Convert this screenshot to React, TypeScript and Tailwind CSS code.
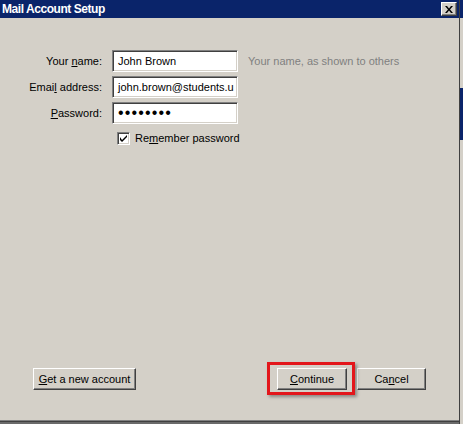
import React from 'react';

const font = "font-['Liberation_Sans',Arial,sans-serif]";

const raised =
  'border border-t-white border-l-white border-b-[#404040] border-r-[#404040] shadow-[inset_-1px_-1px_0_#808080,inset_1px_1px_0_#d4d0c8] bg-[#d4d0c8]';
const sunken =
  'border border-t-[#808080] border-l-[#808080] border-b-white border-r-white shadow-[inset_1px_1px_0_#404040,inset_-1px_-1px_0_#d4d0c8] bg-white';

const Field: React.FC<{ label: React.ReactNode; children: React.ReactNode; hint?: string }> = ({ label, children, hint }) => (
  <div className="flex items-center h-[22px]">
    <div className="w-[102px] text-right text-black">{label}</div>
    <div className={`ml-[10px] w-[126px] h-[22px] flex items-center pl-[5px] overflow-hidden whitespace-nowrap ${sunken}`}>
      {children}
    </div>
    {hint && <div className="ml-[10px] text-[#808080]">{hint}</div>}
  </div>
);

const Button: React.FC<{ className?: string; children: React.ReactNode }> = ({ className = '', children }) => (
  <button className={`h-[22px] flex items-center justify-center text-black ${raised} ${className}`}>{children}</button>
);

const App: React.FC = () => {
  return (
    <div className={`w-[463px] h-[424px] flex bg-[#d4d0c8] text-[11px] ${font}`}>
      <div className="w-[460px] flex flex-col border-r border-[#404040]">
        {/* title bar */}
        <div className="h-[18px] bg-[#0a246a] flex items-center justify-between pl-[2px] pr-[2px]">
          <span className="text-white font-bold text-[12px] tracking-[-0.45px]">Mail Account Setup</span>
          <div className={`w-[16px] h-[14px] flex items-center justify-center ${raised}`}>
            <svg width="8" height="7" viewBox="0 0 8 7">
              <path d="M0 0h2l2 2.5L6 0h2L5 3.5 8 7H6L4 4.5 2 7H0l3-3.5z" fill="#000" />
            </svg>
          </div>
        </div>
        <div className="h-px bg-[#d4d0c8]" />

        {/* body */}
        <div className="flex-1 flex flex-col">
          <div className="pt-[31px] flex flex-col gap-[4px]">
            <Field
              label={<>Your <u>n</u>ame:</>}
              hint="Your name, as shown to others"
            >
              John Brown
            </Field>
            <Field label={<>Emai<u>l</u> address:</>}>john.brown@students.u</Field>
            <Field label={<><u>P</u>assword:</>}>
              <span className="text-[16px] tracking-[1.15px] leading-none">••••••••</span>
            </Field>
            <div className="flex items-center mt-[2px] pl-[117px] gap-[5px]">
              <div className={`w-[13px] h-[13px] flex items-center justify-center ${sunken}`}>
                <svg width="7" height="7" viewBox="0 0 7 7">
                  <path d="M0 2v3l2 2 5-5V-0L2 5z" fill="#000" />
                </svg>
              </div>
              <span>
                Re<u>m</u>ember password
              </span>
            </div>
          </div>

          <div className="flex-1" />

          <div className="flex items-center px-[33px] mb-[30px]">
            <Button className="w-[103px]">
              <u>G</u>et a new account
            </Button>
            <div className="flex-1" />
            <div className="relative">
              <Button className="w-[70px]">
                <u>C</u>ontinue
              </Button>
              <div className="absolute left-[-10px] top-[-6px] w-[88px] h-[33px] border-[3px] border-[#e3161b] shadow-[2px_2px_3px_rgba(0,0,0,0.35)] pointer-events-none" />
            </div>
            <Button className="w-[69px] ml-[10px]">
              Ca<u>n</u>cel
            </Button>
          </div>
        </div>
        <div className="h-px bg-[#808080]" />
        <div className="h-px bg-[#404040]" />
        <div className="h-[2px] bg-[#6a6a6a]" />
      </div>
      <div className="flex-1 flex flex-col">
        <div className="h-[18px] bg-[#0a246a]" />
        <div className="h-[70px] bg-[#d4d0c8]" />
        <div className="h-[52px] bg-[#0a246a]" />
        <div className="flex-1 bg-[#d4d0c8]" />
      </div>
    </div>
  );
};

export default App;
